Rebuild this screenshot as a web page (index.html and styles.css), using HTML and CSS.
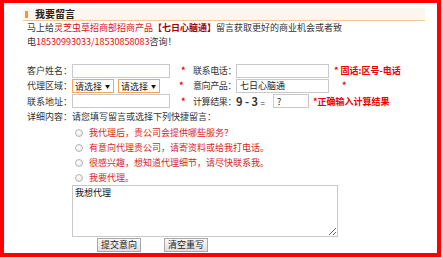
FILE: index.html
```html
<!DOCTYPE html>
<html lang="zh-CN">
<head>
  <meta charset="UTF-8" />
  <title>我要留言</title>
  <link rel="stylesheet" href="styles.css">
</head>
<body>

  <div class="kuang">
    <div class="biaoti"><span class="shu"></span>我要留言</div>
    <p class="shuoming">马上给<span class="hong">灵芝虫草招商部招商产品</span><b class="anhong">【七日心脑通】</b>留言获取更好的商业机会或者致<br>电<span class="hong">18530993033/18530858083</span>咨询！</p>

    <form class="liuyan">
      <label class="ming">客户姓名：</label>
      <div class="zhi"><input class="wenben" type="text"><em class="xing">*</em></div>
      <label class="ming ming2">联系电话：</label>
      <div class="zhi"><input class="wenben2" type="text"><em class="tishi">* 固话:区号-电话</em></div>

      <label class="ming">代理区域：</label>
      <div class="zhi">
        <span class="xiala"><select><option>请选择</option></select></span>
        <span class="xiala"><select><option>请选择</option></select></span>
        <em class="xing xing-xl">*</em>
      </div>
      <label class="ming ming2">意向产品：</label>
      <div class="zhi"><input class="wenben2" type="text" value="七日心脑通"><em class="xing xing-cp">*</em></div>

      <label class="ming">联系地址：</label>
      <div class="zhi"><input class="wenben" type="text"><em class="xing">*</em></div>
      <label class="ming ming2">计算结果：</label>
      <div class="zhi"><span class="suanshi">9 - 3 <small>=</small></span><input class="jieguo" type="text" value="?"><em class="tishi tishi-js">*正确输入计算结果</em></div>

      <label class="ming hang-xq">详细内容：</label>
      <div class="kuaijie hang-xq">请您填写留言或选择下列快捷留言：</div>

      <ul class="xuanxiang">
        <li><input type="radio" name="kj">我代理后，贵公司会提供哪些服务？</li>
        <li><input type="radio" name="kj">有意向代理贵公司，请寄资料或给我打电话。</li>
        <li><input type="radio" name="kj">很感兴趣，想知道代理细节，请尽快联系我。</li>
        <li><input type="radio" name="kj">我要代理。</li>
      </ul>

      <textarea class="neirong">我想代理</textarea>

      <div class="anniu">
        <button type="button">提交意向</button>
        <button type="reset">清空重写</button>
      </div>
    </form>
  </div>

</body>
</html>
```

FILE: styles.css
```css
body {
  margin: 0;
  background: #dcdcdc;
  font-family: "Noto Sans CJK SC", sans-serif;
  font-size: 9px;
  color: #333;
}

.kuang {
  box-sizing: border-box;
  width: 441px;
  height: 257px;
  border: 4px solid #f00;
  border-top-width: 3px;
  background: #fff;
  padding: 5px 0 0 19px;
}

.biaoti {
  width: 402px;
  height: 12px;
  line-height: 12px;
  background: #fdf5ef;
  border-bottom: 1px solid #f3c79c;
  font-size: 10px;
  font-weight: bold;
  color: #222;
  display: flex;
  align-items: center;
  gap: 7px;
}

.shu {
  width: 3px;
  height: 7px;
  margin-left: 2px;
  background: #f39a2b;
}

.shuoming {
  margin: 0 0 0 4px;
  line-height: 14px;
  color: #333;
  white-space: nowrap;
}

.hong {
  color: #e01010;
}

.anhong {
  color: #a00000;
}

.liuyan {
  margin: 14px 0 0 4px;
  display: grid;
  grid-template-columns: 45px 121px 43px auto;
  grid-auto-rows: minmax(15px, auto);
  align-items: center;
}

.ming {
  white-space: nowrap;
  color: #333;
}

.ming2 {
  letter-spacing: -0.4px;
}

.zhi {
  display: flex;
  align-items: center;
}

input[type=text] {
  box-sizing: border-box;
  height: 14px;
  border: 1px solid #c9c9c9;
  padding: 0 3px;
  font-family: inherit;
  font-size: 9px;
  color: #222;
  background: #fff;
  outline: none;
}

.wenben {
  width: 98px;
}

.wenben2 {
  width: 93px;
}

.jieguo {
  width: 36px;
}

.xing {
  font-style: normal;
  font-weight: bold;
  color: #e00;
  margin-left: 11px;
}

.xing-xl {
  margin-left: 15px;
}

.xing-cp {
  margin-left: 13px;
}

.tishi {
  font-style: normal;
  font-weight: bold;
  color: #e00;
  margin-left: 5px;
  white-space: nowrap;
}

.tishi-js {
  margin-left: 4px;
}

.xiala {
  position: relative;
  margin-right: 4px;
}

.xiala select {
  appearance: none;
  box-sizing: border-box;
  width: 42px;
  height: 14px;
  border: 1px solid #f2a55c;
  border-radius: 0;
  padding: 0 0 0 2px;
  background: #fff;
  font-family: inherit;
  font-size: 9px;
  color: #222;
  display: block;
}

.xiala::after {
  content: "▼";
  position: absolute;
  right: 4px;
  top: 4px;
  font-size: 5px;
  line-height: 6px;
  color: #111;
}

.suanshi {
  width: 37px;
  font-size: 11px;
  font-weight: bold;
  color: #333;
  white-space: nowrap;
}

.suanshi small {
  font-size: 8px;
  font-weight: normal;
}

.liuyan .hang-xq {
  height: 16px;
  line-height: 16px;
}

.kuaijie {
  grid-column: 2 / -1;
  color: #333;
}

.xuanxiang {
  grid-column: 2 / -1;
  list-style: none;
  margin: 0;
  padding: 0;
}

.xuanxiang li {
  height: 15px;
  display: flex;
  align-items: center;
  color: #d81e1e;
}

.xuanxiang input {
  appearance: none;
  width: 8px;
  height: 8px;
  margin: 0 6px 0 3px;
  border: 1px solid #b5b5b5;
  border-radius: 50%;
  background: radial-gradient(circle at 40% 35%, #fff, #e2e2e2);
}

.neirong {
  grid-column: 2 / -1;
  box-sizing: border-box;
  width: 266px;
  height: 52px;
  margin: 0;
  border: 1px solid #c9c9c9;
  padding: 1px 2px;
  font-family: inherit;
  font-size: 9px;
  line-height: 11px;
  color: #111;
  resize: both;
}

.anniu {
  grid-column: 2 / -1;
  display: flex;
  gap: 23px;
  padding-left: 25px;
}

.anniu button {
  box-sizing: border-box;
  height: 14px;
  padding: 0 3px;
  border: 1px solid #a8a8a8;
  border-radius: 0;
  background: linear-gradient(#fafafa, #dedede);
  font-family: inherit;
  font-size: 9px;
  line-height: 12px;
  color: #222;
}
```
